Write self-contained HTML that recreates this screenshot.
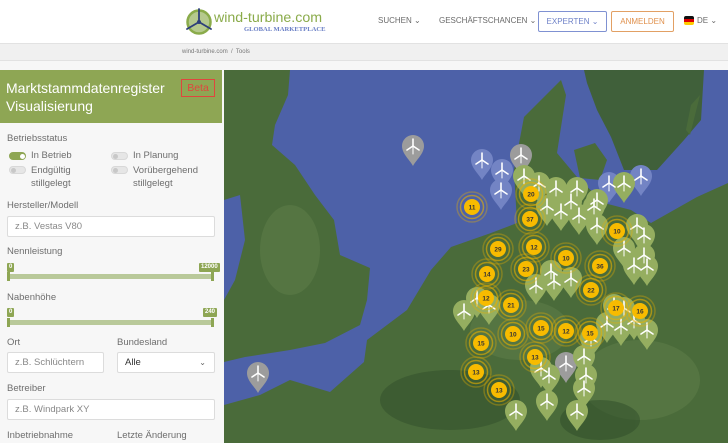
<!DOCTYPE html>
<html><head><meta charset="utf-8"><style>
*{margin:0;padding:0;box-sizing:border-box}
body{width:728px;height:443px;overflow:hidden;font-family:"Liberation Sans",sans-serif;background:#f7f7f7;position:relative}
.a{position:absolute;white-space:nowrap}
.hdr{left:0;top:0;width:728px;height:44px;background:#fff;border-bottom:1px solid #e2e2e2}
.nav{font-size:8px;color:#6a6a6a;top:16px}
.btn{top:11px;height:21px;border:1px solid;border-radius:2px;font-size:8px;line-height:19px;text-align:center}
.lbl{font-size:9.5px;color:#6e6e6e}
.inp{background:#fff;border:1px solid #dcdcdc;border-radius:2px;height:21px;font-size:9.5px;color:#888;line-height:19px;padding-left:7px}
.tg{width:17px;height:8px;border-radius:4px;background:#e6e6e6;border:1px solid #d8d8d8}
.tg:after{content:"";position:absolute;left:1px;top:1px;width:5px;height:5px;border-radius:50%;background:#c8c8c8}
.tg.on{background:#8ea654;border-color:#8ea654}
.tg.on:after{left:10px;background:#fff}
.bar{height:5px;background:#b9c99a}
.bub{font-size:6px;font-weight:bold;color:#fff;background:#8ea654;height:9px;line-height:9px;padding:0 2px;border-radius:1px}
</style></head><body>
<div class="a hdr"></div>
<svg class="a" style="left:185px;top:8px" width="28" height="28" viewBox="-14 -14 28 28">
<circle r="11.5" fill="#b5c98d" stroke="#8aab4a" stroke-width="2.5"/>
<g stroke="#2d3f7a" stroke-width="1.8" stroke-linecap="round"><line x1="0" y1="0" x2="0" y2="-13"/><line x1="0" y1="0" x2="-12" y2="7"/><line x1="0" y1="0" x2="12" y2="7"/></g><circle r="2" fill="#2d3f7a"/></svg>
<div class="a" style="left:214px;top:10px;font-size:14.2px;color:#8aab4a">wind-turbine.com</div>
<div class="a" style="left:244px;top:26px;font-size:6.6px;font-weight:bold;color:#6b80c6;font-family:'Liberation Serif',serif">GLOBAL MARKETPLACE</div>
<div class="a nav" style="left:378px">SUCHEN ⌄</div>
<div class="a nav" style="left:439px">GESCHÄFTSCHANCEN ⌄</div>
<div class="a btn" style="left:538px;width:69px;border-color:#7f91d2;color:#6f82c8">EXPERTEN ⌄</div>
<div class="a btn" style="left:611px;width:63px;border-color:#e2a064;color:#e0904c">ANMELDEN</div>
<div class="a" style="left:684px;top:16px;width:10px;height:9px;border-radius:2px;background:linear-gradient(#111 33%,#d00 33%,#d00 66%,#fc0 66%)"></div>
<div class="a nav" style="left:697px">DE ⌄</div>
<div class="a" style="left:0;top:44px;width:728px;height:17px;background:#f0f0f0;border-bottom:1px solid #e2e2e2"></div>
<div class="a" style="left:182px;top:49px;font-size:6px;color:#777">wind-turbine.com &nbsp;/&nbsp; Tools</div>

<div class="a" style="left:0;top:70px;width:222px;height:53px;background:#8ea654"></div>
<div class="a" style="left:6px;top:79px;font-size:14px;color:#fff;line-height:18px">Marktstammdatenregister<br>Visualisierung</div>
<div class="a" style="left:181px;top:79px;width:34px;height:18px;border:1px solid #e0463e;color:#e0463e;font-size:10.5px;text-align:center;line-height:16px">Beta</div>
<div class="a lbl" style="left:7px;top:133px">Betriebsstatus</div>
<div class="a tg on" style="left:9px;top:152px"></div><div class="a lbl" style="left:31px;top:150px">In Betrieb</div>
<div class="a tg" style="left:111px;top:152px"></div><div class="a lbl" style="left:133px;top:150px">In Planung</div>
<div class="a tg" style="left:9px;top:166px"></div><div class="a lbl" style="left:31px;top:164px;line-height:13px">Endgültig<br>stillgelegt</div>
<div class="a tg" style="left:111px;top:166px"></div><div class="a lbl" style="left:133px;top:164px;line-height:13px">Vorübergehend<br>stillgelegt</div>
<div class="a lbl" style="left:7px;top:200px">Hersteller/Modell</div>
<div class="a inp" style="left:7px;top:216px;width:208px">z.B. Vestas V80</div>
<div class="a lbl" style="left:7px;top:246px">Nennleistung</div>
<div class="a bub" style="left:7px;top:263px">0</div><div class="a bub" style="left:199px;top:263px">12000</div>
<div class="a bar" style="left:7px;top:274px;width:207px"></div>
<div class="a" style="left:7px;top:272px;width:3px;height:9px;background:#8ea654"></div><div class="a" style="left:211px;top:272px;width:3px;height:9px;background:#8ea654"></div>
<div class="a lbl" style="left:7px;top:292px">Nabenhöhe</div>
<div class="a bub" style="left:7px;top:308px">0</div><div class="a bub" style="left:203px;top:308px">240</div>
<div class="a bar" style="left:7px;top:320px;width:207px"></div>
<div class="a" style="left:7px;top:318px;width:3px;height:9px;background:#8ea654"></div><div class="a" style="left:211px;top:318px;width:3px;height:9px;background:#8ea654"></div>
<div class="a lbl" style="left:7px;top:337px">Ort</div><div class="a lbl" style="left:117px;top:337px">Bundesland</div>
<div class="a inp" style="left:7px;top:352px;width:97px">z.B. Schlüchtern</div>
<div class="a inp" style="left:117px;top:352px;width:98px;color:#333">Alle<span style="position:absolute;right:8px;color:#666;font-size:8px">⌄</span></div>
<div class="a lbl" style="left:7px;top:383px">Betreiber</div>
<div class="a inp" style="left:7px;top:399px;width:208px">z.B. Windpark XY</div>
<div class="a lbl" style="left:7px;top:430px">Inbetriebnahme</div><div class="a lbl" style="left:117px;top:430px">Letzte Änderung</div>

<div class="a" style="left:224px;top:70px;width:504px;height:373px;background:#4d61a8"></div>
<svg class="a" style="left:224px;top:70px" width="504" height="373" viewBox="224 70 504 373">
<defs>
<g id="t" stroke="#fff" stroke-width="1.6" stroke-linecap="round"><line x1="0" y1="0" x2="0" y2="-7"/><line x1="0" y1="0" x2="-6" y2="4"/><line x1="0" y1="0" x2="6" y2="4"/><line x1="0" y1="0" x2="0" y2="8" stroke-width="1"/></g>
<path id="p" d="M0,20 C-3,14 -11,8 -11,0 A11,11 0 1 1 11,0 C11,8 3,14 0,20Z"/>
<g id="c"><circle r="15" fill="none" stroke="#e8b000" stroke-width="1.5" opacity=".35"/><circle r="11.5" fill="none" stroke="#e8b000" stroke-width="1.5" opacity=".6"/><circle r="8" fill="#f7bb00"/></g>
</defs>
<path fill="#4a6b3a" d="M224,70 L290,70 L288,95 L275,125 L272,145 L295,165 L315,195 L334,220 L340,255 L370,268 L367,300 L360,325 L325,343 L290,350 L245,357 L224,362Z"/>
<path fill="#4a6b3a" d="M224,443 L224,405 L260,395 L290,380 L330,392 L364,362 L367,340 L407,310 L431,270 L451,247 L491,233 L517,223 L514,170 L524,117 L561,80 L566,95 L557,153 L577,177 L604,203 L631,210 L651,223 L697,197 L728,183 L728,443Z"/>
<path fill="#40603a" d="M584,70 L704,70 L701,120 L684,140 L657,170 L624,170 L611,137 L597,110 L587,83Z"/>
<path fill="#4a6b3a" d="M574,150 L595,143 L607,160 L600,180 L580,178Z"/>
<path fill="#4a6b3a" d="M691,105 L700,95 L690,135 L686,130Z"/>
<path fill="#4d61a8" d="M224,200 L240,195 L245,240 L235,280 L224,300Z"/>
<g fill="#60804a" opacity=".5"><ellipse cx="520" cy="330" rx="50" ry="30"/><ellipse cx="640" cy="380" rx="60" ry="40"/><ellipse cx="290" cy="250" rx="30" ry="45"/></g>
<g fill="#2f4d2a" opacity=".5"><ellipse cx="450" cy="400" rx="70" ry="30"/><ellipse cx="600" cy="420" rx="40" ry="20"/></g>
<g fill="#9c9c9c"><use href="#p" x="413" y="146"/><use href="#p" x="521" y="155"/><use href="#p" x="258" y="373"/><use href="#p" x="566" y="363"/></g>
<g fill="#7384c4"><use href="#p" x="482" y="160"/><use href="#p" x="502" y="170"/><use href="#p" x="501" y="190"/><use href="#p" x="609" y="183"/><use href="#p" x="641" y="176"/></g>
<g fill="#95ae60">
<use href="#p" x="524" y="176"/><use href="#p" x="539" y="183"/><use href="#p" x="556" y="188"/><use href="#p" x="577" y="188"/><use href="#p" x="547" y="206"/><use href="#p" x="561" y="211"/><use href="#p" x="571" y="201"/><use href="#p" x="579" y="215"/><use href="#p" x="594" y="206"/><use href="#p" x="597" y="200"/><use href="#p" x="624" y="183"/><use href="#p" x="597" y="225"/><use href="#p" x="637" y="225"/><use href="#p" x="644" y="235"/><use href="#p" x="624" y="248"/><use href="#p" x="644" y="255"/><use href="#p" x="634" y="265"/><use href="#p" x="647" y="266"/><use href="#p" x="551" y="271"/><use href="#p" x="571" y="278"/><use href="#p" x="554" y="281"/><use href="#p" x="536" y="285"/><use href="#p" x="477" y="298"/><use href="#p" x="464" y="311"/><use href="#p" x="489" y="305"/><use href="#p" x="607" y="323"/><use href="#p" x="621" y="326"/><use href="#p" x="634" y="320"/><use href="#p" x="647" y="330"/><use href="#p" x="591" y="338"/><use href="#p" x="584" y="356"/><use href="#p" x="541" y="368"/><use href="#p" x="549" y="375"/><use href="#p" x="586" y="375"/><use href="#p" x="584" y="388"/><use href="#p" x="547" y="401"/><use href="#p" x="577" y="411"/><use href="#p" x="516" y="411"/><use href="#p" x="614" y="305"/><use href="#p" x="624" y="308"/>
</g>
<g>
<use href="#t" x="413" y="146"/><use href="#t" x="521" y="155"/><use href="#t" x="258" y="373"/><use href="#t" x="566" y="363"/><use href="#t" x="482" y="160"/><use href="#t" x="502" y="170"/><use href="#t" x="501" y="190"/><use href="#t" x="609" y="183"/><use href="#t" x="641" y="176"/>
<use href="#t" x="524" y="176"/><use href="#t" x="539" y="183"/><use href="#t" x="556" y="188"/><use href="#t" x="577" y="188"/><use href="#t" x="547" y="206"/><use href="#t" x="561" y="211"/><use href="#t" x="571" y="201"/><use href="#t" x="579" y="215"/><use href="#t" x="594" y="206"/><use href="#t" x="597" y="200"/><use href="#t" x="624" y="183"/><use href="#t" x="597" y="225"/><use href="#t" x="637" y="225"/><use href="#t" x="644" y="235"/><use href="#t" x="624" y="248"/><use href="#t" x="644" y="255"/><use href="#t" x="634" y="265"/><use href="#t" x="647" y="266"/><use href="#t" x="551" y="271"/><use href="#t" x="571" y="278"/><use href="#t" x="554" y="281"/><use href="#t" x="536" y="285"/><use href="#t" x="477" y="298"/><use href="#t" x="464" y="311"/><use href="#t" x="489" y="305"/><use href="#t" x="607" y="323"/><use href="#t" x="621" y="326"/><use href="#t" x="634" y="320"/><use href="#t" x="647" y="330"/><use href="#t" x="591" y="338"/><use href="#t" x="584" y="356"/><use href="#t" x="541" y="368"/><use href="#t" x="549" y="375"/><use href="#t" x="586" y="375"/><use href="#t" x="584" y="388"/><use href="#t" x="547" y="401"/><use href="#t" x="577" y="411"/><use href="#t" x="516" y="411"/><use href="#t" x="614" y="305"/><use href="#t" x="624" y="308"/>
</g>
<g><use href="#c" x="472" y="207"/><use href="#c" x="531" y="194"/><use href="#c" x="530" y="219"/><use href="#c" x="498" y="249"/><use href="#c" x="534" y="247"/><use href="#c" x="566" y="258"/><use href="#c" x="600" y="266"/><use href="#c" x="617" y="231"/><use href="#c" x="526" y="269"/><use href="#c" x="487" y="274"/><use href="#c" x="591" y="290"/><use href="#c" x="486" y="298"/><use href="#c" x="511" y="305"/><use href="#c" x="616" y="308"/><use href="#c" x="640" y="311"/><use href="#c" x="541" y="328"/><use href="#c" x="566" y="331"/><use href="#c" x="513" y="334"/><use href="#c" x="590" y="333"/><use href="#c" x="481" y="343"/><use href="#c" x="535" y="357"/><use href="#c" x="476" y="372"/><use href="#c" x="499" y="390"/></g>
<g font-family="Liberation Sans" font-size="6.5" font-weight="bold" fill="#333" text-anchor="middle">
<text x="472" y="209.5">11</text><text x="531" y="196.5">20</text><text x="530" y="221.5">37</text><text x="498" y="251.5">29</text><text x="534" y="249.5">12</text><text x="566" y="260.5">10</text><text x="600" y="268.5">36</text><text x="617" y="233.5">10</text><text x="526" y="271.5">23</text><text x="487" y="276.5">14</text><text x="591" y="292.5">22</text><text x="486" y="300.5">12</text><text x="511" y="307.5">21</text><text x="616" y="310.5">17</text><text x="640" y="313.5">16</text><text x="541" y="330.5">15</text><text x="566" y="333.5">12</text><text x="513" y="336.5">10</text><text x="590" y="335.5">15</text><text x="481" y="345.5">15</text><text x="535" y="359.5">13</text><text x="476" y="374.5">13</text><text x="499" y="392.5">13</text>
</g>
</svg>
</body></html>
